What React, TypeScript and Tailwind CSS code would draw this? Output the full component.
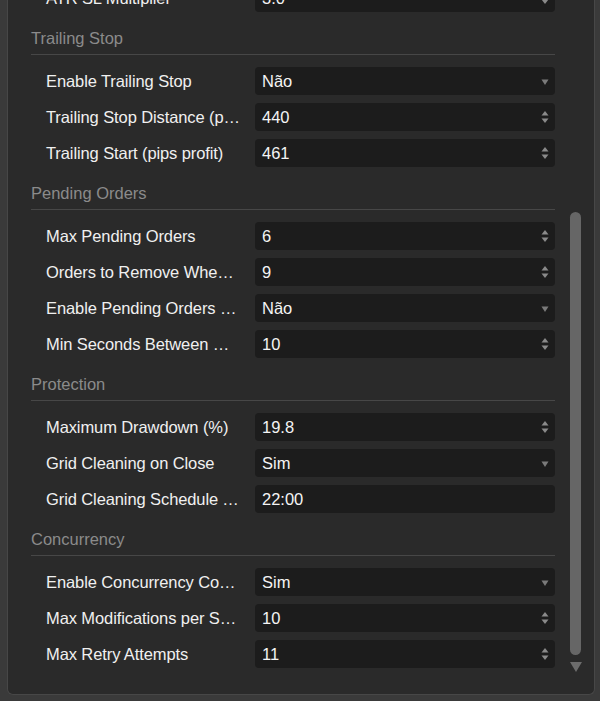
import type { ReactNode } from 'react';

type Field = {
  label: string;
  value: string;
  kind: 'number' | 'select' | 'text';
};

type Section = {
  title: string;
  fields: Field[];
};

const sections: Section[] = [
  {
    title: 'Trailing Stop',
    fields: [
      { label: 'Enable Trailing Stop', value: 'Não', kind: 'select' },
      { label: 'Trailing Stop Distance (pips)', value: '440', kind: 'number' },
      { label: 'Trailing Start (pips profit)', value: '461', kind: 'number' },
    ],
  },
  {
    title: 'Pending Orders',
    fields: [
      { label: 'Max Pending Orders', value: '6', kind: 'number' },
      { label: 'Orders to Remove When Exceeded', value: '9', kind: 'number' },
      { label: 'Enable Pending Orders Cleanup', value: 'Não', kind: 'select' },
      { label: 'Min Seconds Between Orders', value: '10', kind: 'number' },
    ],
  },
  {
    title: 'Protection',
    fields: [
      { label: 'Maximum Drawdown (%)', value: '19.8', kind: 'number' },
      { label: 'Grid Cleaning on Close', value: 'Sim', kind: 'select' },
      { label: 'Grid Cleaning Schedule Time', value: '22:00', kind: 'text' },
    ],
  },
  {
    title: 'Concurrency',
    fields: [
      { label: 'Enable Concurrency Control', value: 'Sim', kind: 'select' },
      { label: 'Max Modifications per Second', value: '10', kind: 'number' },
      { label: 'Max Retry Attempts', value: '11', kind: 'number' },
    ],
  },
];

function SpinArrows() {
  return (
    <svg width="8" height="16" viewBox="0 0 8 16" className="shrink-0">
      <path d="M4 2 L7.5 6.5 L0.5 6.5 Z" fill="#8a8a8a" />
      <path d="M4 14 L7.5 9.5 L0.5 9.5 Z" fill="#8a8a8a" />
    </svg>
  );
}

function SelectArrow() {
  return (
    <svg width="8" height="8" viewBox="0 0 8 8" className="mt-[2px] shrink-0">
      <path d="M4 7 L7.5 1.5 L0.5 1.5 Z" fill="#7a7a7a" />
    </svg>
  );
}

function Row({ field }: { field: Field }) {
  return (
    <div className="flex h-7 items-center">
      <div className="w-[224px] shrink-0 truncate pl-[15px] pr-[14px] tracking-[-0.1px] text-[#f0f0f0]">
        {field.label}
      </div>
      <div className="flex h-7 flex-1 items-center justify-between rounded-[4px] bg-[#1c1c1c] pl-[7px] pr-[6px] text-[#f4f4f4]">
        <span>{field.value}</span>
        {field.kind === 'number' && <SpinArrows />}
        {field.kind === 'select' && <SelectArrow />}
      </div>
    </div>
  );
}

function SectionBlock({ section }: { section: Section }) {
  return (
    <div className="mt-4">
      <div className="border-b border-[#474747] pb-[6px] leading-5 text-[#8b8b8b]">
        {section.title}
      </div>
      <div className="flex flex-col gap-2 pt-3">
        {section.fields.map((f) => (
          <Row key={f.label} field={f} />
        ))}
      </div>
    </div>
  );
}

function Scrollbar(): ReactNode {
  return (
    <div className="flex flex-1 flex-col pl-[15px]">
      <div className="mt-[212px] h-[443px] w-[11px] rounded-full bg-[#666666]" />
      <svg width="12" height="10" viewBox="0 0 12 10" className="mt-[7px]">
        <path d="M6 10 L12 0 L0 0 Z" fill="#6c6c6c" />
      </svg>
    </div>
  );
}

export default function App() {
  return (
    <div className="h-[701px] w-[600px] overflow-hidden bg-[#3a3a3a] font-['Liberation_Sans',Arial,sans-serif] text-[16.5px]">
      <div className="ml-[7px] mr-[5px] flex h-[695px] overflow-hidden rounded-b-[6px] border border-t-0 border-[#474747] bg-[#2a2a2a]">
        <div className="w-[547px] shrink-0 pl-[23px]">
          {/* list is scrolled: previous row is partly out of view */}
          <div className="-mt-4">
            <Row field={{ label: 'ATR SL Multiplier', value: '3.0', kind: 'number' }} />
          </div>
          {sections.map((s) => (
            <SectionBlock key={s.title} section={s} />
          ))}
        </div>
        <Scrollbar />
      </div>
    </div>
  );
}
